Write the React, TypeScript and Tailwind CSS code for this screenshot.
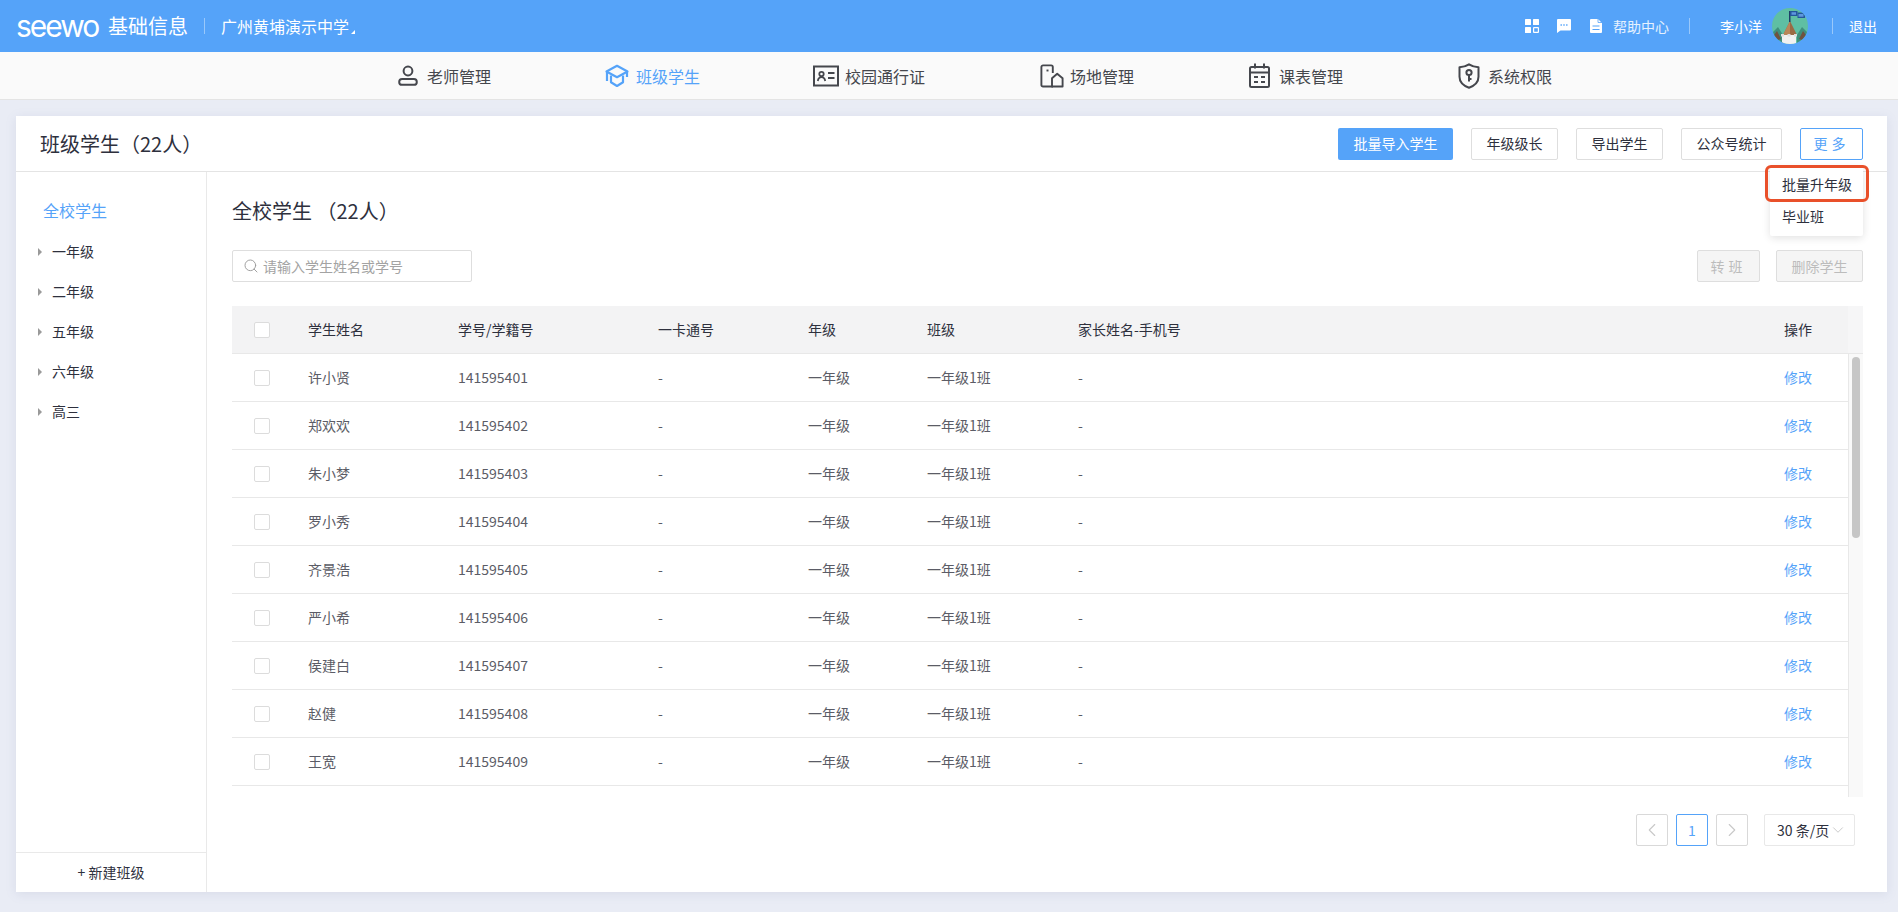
import type { ReactNode } from "react";
import { ChevronDown, ChevronLeft, ChevronRight, Search } from "lucide-react";

const students = [
  ["许小贤", "141595401"],
  ["郑欢欢", "141595402"],
  ["朱小梦", "141595403"],
  ["罗小秀", "141595404"],
  ["齐景浩", "141595405"],
  ["严小希", "141595406"],
  ["侯建白", "141595407"],
  ["赵健", "141595408"],
  ["王宽", "141595409"],
];

const grades = ["一年级", "二年级", "五年级", "六年级", "高三"];

const cols = "grid grid-cols-[76px_150px_200px_150px_119px_151px_706px_64px] items-center";

const UserIcon = () => (
  <svg width="20" height="21" viewBox="0 0 20 21" fill="none" stroke="#45474d" strokeWidth="2">
    <circle cx="10" cy="6" r="4.4" />
    <rect x="1.2" y="14" width="17.6" height="5.8" rx="2.9" />
  </svg>
);

const CapIcon = () => (
  <svg width="24" height="24" viewBox="0 0 24 24" fill="none" stroke="#55a3f9" strokeWidth="2.2" strokeLinejoin="round">
    <path d="M12 1.8 22.5 7.5 12 13.2 1.5 7.5Z" />
    <path d="M2 8v9M6 11.5v6.8l6 3.7 6-3.7v-6.8" />
    <path d="M22 8v5" />
  </svg>
);

const CardIcon = () => (
  <svg width="26" height="22" viewBox="0 0 26 22" fill="none" stroke="#45474d">
    <rect x="1" y="1.5" width="24" height="19" strokeWidth="2" />
    <circle cx="8.5" cy="9" r="2.2" strokeWidth="1.8" />
    <path d="M4.8 16c.4-2.6 1.8-3.8 3.7-3.8s3.3 1.2 3.7 3.8" strokeWidth="1.8" />
    <path d="M15 8h6.5M15 13h6.5" strokeWidth="2" />
  </svg>
);

const PlaceIcon = () => (
  <svg width="24" height="24" viewBox="0 0 24 24" fill="none" stroke="#45474d" strokeWidth="1.9" strokeLinejoin="round">
    <path d="M13 22.5H3a1.6 1.6 0 0 1-1.6-1.6V3A1.6 1.6 0 0 1 3 1.4h8.2A1.6 1.6 0 0 1 12.8 3v6" />
    <path d="M12 22.5v-8.2l5.2-4.5 5.4 4.5v8.2Z" />
    <path d="M6.5 6.5h2" />
  </svg>
);

const CalendarIcon = () => (
  <svg width="21" height="25" viewBox="0 0 21 25" fill="none" stroke="#45474d" strokeWidth="2">
    <rect x="1" y="4" width="19" height="20" rx="1.5" />
    <path d="M6 .5v5M15 .5v5M1 9.5h19" />
    <path d="M5 14h4M12 14h4M5 19h4M12 19h4" />
  </svg>
);

const ShieldIcon = () => (
  <svg width="22" height="26" viewBox="0 0 22 26" fill="none" stroke="#45474d" strokeWidth="2" strokeLinejoin="round">
    <path d="M11 1.3c2.8 1.8 5.8 2.8 9.500 3v9.400c0 5-3.600 8.800-9.500 11-5.900-2.200-9.500-6-9.500-11V4.300c3.700-.2 6.700-1.200 9.500-3Z" />
    <circle cx="11" cy="9.500" r="2.600" />
    <path d="M11 12v6.500M11 16h2.500" />
  </svg>
);

// item pitch and icon slot are taken from the reference, the labels don't line up on a plain gap
const navItems: { label: string; icon: ReactNode; item: string; slot: string; active?: boolean }[] = [
  { label: "老师管理", icon: <UserIcon />, item: "w-[207px]", slot: "w-[29px]" },
  { label: "班级学生", icon: <CapIcon />, item: "w-[208px]", slot: "w-[31px]", active: true },
  { label: "校园通行证", icon: <CardIcon />, item: "w-[227px]", slot: "w-[32px]" },
  { label: "场地管理", icon: <PlaceIcon />, item: "w-[209px]", slot: "w-[30px]" },
  { label: "课表管理", icon: <CalendarIcon />, item: "w-[209px]", slot: "w-[30px]" },
  { label: "系统权限", icon: <ShieldIcon />, item: "w-[100px]", slot: "w-[30px]" },
];

const GridIcon = () => (
  <svg width="14" height="14" viewBox="0 0 14 14" fill="#fff">
    <rect x="0" y="0" width="6" height="6" rx="0.6" />
    <rect x="8" y="0" width="6" height="6" rx="0.6" />
    <rect x="0" y="8" width="6" height="6" rx="0.6" />
    <rect x="8.6" y="8.6" width="4.8" height="4.8" rx="0.4" fill="none" stroke="#fff" strokeWidth="1.2" />
  </svg>
);

const ChatIcon = () => (
  <svg width="14" height="14" viewBox="0 0 14 14">
    <path d="M1 0h12a1 1 0 0 1 1 1v9.500a1 1 0 0 1-1 1H3.500L0 14V1a1 1 0 0 1 1-1Z" fill="#fff" />
    <path d="M3.500 6h1.400M6.300 6h1.400M9.100 6h1.400" stroke="#55a3f9" strokeWidth="1.4" />
  </svg>
);

const DocIcon = () => (
  <svg width="12" height="14" viewBox="0 0 12 14">
    <path d="M1 0h7l4 4v9a1 1 0 0 1-1 1H1a1 1 0 0 1-1-1V1a1 1 0 0 1 1-1Z" fill="#fff" />
    <path d="M2.500 7h7M2.500 10.500h7" stroke="#55a3f9" strokeWidth="1.2" />
    <path d="M8 0v3.500h4" fill="none" stroke="#55a3f9" strokeWidth="0.8" />
  </svg>
);

const Avatar = () => (
  <svg width="36" height="36" viewBox="0 0 36 36">
    <defs>
      <clipPath id="avatar-clip">
        <circle cx="18" cy="18" r="18" />
      </clipPath>
    </defs>
    <g clipPath="url(#avatar-clip)">
      <rect width="36" height="36" fill="#5fbfa3" />
      <path d="M0 25 6 19 11 27 11 36H0Z" fill="#3f8f7c" />
      <path d="M36 25 30 19 25 27 25 36H36Z" fill="#3f8f7c" />
      <path d="M2 27 5 23 9 31 3 33Z" fill="#6f5240" />
      <path d="M34 27 31 23 27 31 33 33Z" fill="#6f5240" />
      <path d="M18 13 25 27H11Z" fill="#9a6a44" />
      <path d="M18 13 18 27H11Z" fill="#b98659" />
      <path d="M10 27h14v9H10Z" fill="#f1f1f1" />
      <path d="M9 26h3v2.500H9ZM15.500 26h3v2.500h-3ZM22 26h3v2.500h-3Z" fill="#dedede" />
      <path d="M17 3h1.500v11H17Z" fill="#1f3f68" />
      <path d="M18 3h7.500v5H18Z" fill="#24569c" />
      <path d="M25.500 4.500H33V10h-7.500Z" fill="#24569c" />
      <path d="M19.500 4.200h4.500v2.600h-4.500ZM26.500 6h5v2.800h-5Z" fill="#5e97de" />
    </g>
  </svg>
);

const Checkbox = () => <span className="block h-4 w-4 rounded-[2px] border border-[#dcdcdc] bg-white" />;

const OutlineButton = ({ children, className }: { children: ReactNode; className: string }) => (
  <button className={`flex h-8 items-center justify-center rounded-[2px] border border-[#dedede] bg-white text-[14px] text-[#2e303d] ${className}`}>
    {children}
  </button>
);

const DisabledButton = ({ children, className }: { children: ReactNode; className: string }) => (
  <button className={`flex h-8 items-center justify-center rounded-[2px] border border-[#dedede] bg-[#f5f5f5] text-[14px] text-[#bcbcbc] ${className}`}>
    {children}
  </button>
);

const App = () => {
  return (
    <div className="flex h-[912px] w-full flex-col overflow-hidden bg-[#e9ecf5] font-['Noto_Sans_CJK_SC','Noto_Sans',sans-serif] text-[#2e303d]">
      {/* top bar */}
      <header className="flex h-[52px] shrink-0 items-center bg-[#55a3f9] pl-4 pr-[21px] text-white">
        <span className="w-[92px] font-['Inter',sans-serif] text-[30px] leading-none font-normal tracking-[-2px]">seewo</span>
        <span className="text-[20px] leading-none">基础信息</span>
        <span className="mx-4 h-4 w-px bg-white/40" />
        <span className="text-[16px] leading-none">广州黄埔演示中学</span>
        <span className="mt-[11px] ml-[2px] h-0 w-0 border-b-[4px] border-l-[4px] border-b-white border-l-transparent" />
        <div className="ml-auto flex items-center">
          <GridIcon />
          <span className="ml-[18px]">
            <ChatIcon />
          </span>
          <span className="ml-[19px]">
            <DocIcon />
          </span>
          <span className="ml-[11px] text-[14px] text-white/85">帮助中心</span>
          <span className="mx-5 h-4 w-px bg-white/40" />
          <span className="ml-[10px] text-[14px]">李小洋</span>
          <span className="ml-[10px] block h-9 w-9">
            <Avatar />
          </span>
          <span className="mx-[16px] ml-6 h-4 w-px bg-white/40" />
          <span className="text-[14px]">退出</span>
        </div>
      </header>

      {/* module nav */}
      <nav className="flex h-12 shrink-0 items-center border-b border-[#e4e4e4] bg-[#fafafa] pl-[398px]">
        {navItems.map((item) => (
          <div key={item.label} className={`flex items-center text-[16px] ${item.item} ${item.active ? "text-[#55a3f9]" : "text-[#45474d]"}`}>
            <span className={`flex ${item.slot}`}>{item.icon}</span>
            <span className="whitespace-nowrap">{item.label}</span>
          </div>
        ))}
      </nav>

      {/* card */}
      <div className="mx-4 mt-4 mr-[11px] mb-5 flex min-h-0 flex-1 flex-col bg-white shadow-[0_2px_10px_rgba(120,130,170,0.15)]">
        <div className="relative flex h-14 shrink-0 items-center border-b border-[#e4e4e4] pr-6 pl-6">
          <h1 className="text-[20px] font-normal">班级学生（22人）</h1>
          <div className="ml-auto flex items-center">
            <button className="flex h-8 w-[115px] items-center justify-center rounded-[2px] bg-[#55a3f9] text-[14px] text-white">批量导入学生</button>
            <OutlineButton className="ml-[18px] w-[87px]">年级级长</OutlineButton>
            <OutlineButton className="ml-[18px] w-[87px]">导出学生</OutlineButton>
            <OutlineButton className="ml-[18px] w-[101px]">公众号统计</OutlineButton>
            <button className="ml-[18px] flex h-8 w-[63px] items-center justify-center rounded-[2px] border border-[#55a3f9] text-[14px] tracking-[4px] text-[#55a3f9]">更多</button>
          </div>

          {/* dropdown */}
          <div className="absolute top-[51px] right-6 z-10 h-[69px] w-[93px] rounded-[2px] bg-white text-[14px] shadow-[0_2px_8px_rgba(0,0,0,0.12)]">
            <div className="flex h-[34px] items-center pl-3">批量升年级</div>
            <div className="flex h-[30px] items-center pl-3">毕业班</div>
            <span className="absolute top-[-2px] left-[-5px] h-[37px] w-[104px] rounded-[6px] border-[3px] border-[#e9502a]" />
          </div>
        </div>

        <div className="flex min-h-0 flex-1">
          {/* class tree */}
          <aside className="flex w-[191px] shrink-0 flex-col border-r border-[#e9e9e9]">
            <div className="flex-1 pt-[26px]">
              <div className="pl-[27px] text-[16px] leading-[24px] text-[#55a3f9]">全校学生</div>
              <ul className="mt-4 flex flex-col gap-[13px]">
                {grades.map((g) => (
                  <li key={g} className="flex h-[27px] items-center text-[14px]">
                    <span className="ml-[22px] h-0 w-0 border-y-[4px] border-l-[4px] border-y-transparent border-l-[#9a9a9a]" />
                    <span className="ml-[10px]">{g}</span>
                  </li>
                ))}
              </ul>
            </div>
            <div className="flex h-10 items-center justify-center border-t border-[#e9e9e9] text-[14px]">+ 新建班级</div>
          </aside>

          {/* student list */}
          <main className="flex min-w-0 flex-1 flex-col pr-6 pl-[25px]">
            <h2 className="mt-6 text-[20px] leading-[30px] font-normal">全校学生 （22人）</h2>
            <div className="mt-6 flex items-center justify-between">
              <div className="flex h-8 w-[240px] items-center rounded-[2px] border border-[#dedede] pl-[10px]">
                <Search size={16} strokeWidth={1.4} className="text-[#9a9a9a]" />
                <span className="ml-1 text-[14px] text-[#a3a3a3]">请输入学生姓名或学号</span>
              </div>
              <div className="flex gap-4">
                <DisabledButton className="w-[63px] tracking-[4px]">转班</DisabledButton>
                <DisabledButton className="w-[87px]">删除学生</DisabledButton>
              </div>
            </div>

            {/* table */}
            <div className="mt-6 flex h-12 shrink-0 border-b border-[#e8e8e8] text-[14px]">
              <div className={`${cols} flex-1 bg-[#f3f3f4]`}>
                <span className="pl-[22px]">
                  <Checkbox />
                </span>
                <span>学生姓名</span>
                <span>学号/学籍号</span>
                <span>一卡通号</span>
                <span>年级</span>
                <span>班级</span>
                <span>家长姓名-手机号</span>
                <span>操作</span>
              </div>
              <div className="w-[15px] bg-[#f6f6f7]" />
            </div>
            <div className="flex h-[443px] shrink-0">
              <div className="w-[1616px] shrink-0">
                {students.map(([name, no]) => (
                  <div key={no} className={`${cols} h-12 border-b border-[#e8e8e8] text-[14px] text-[#5b5c66]`}>
                    <span className="pl-[22px]">
                      <Checkbox />
                    </span>
                    <span>{name}</span>
                    <span>{no}</span>
                    <span>-</span>
                    <span>一年级</span>
                    <span>一年级1班</span>
                    <span>-</span>
                    <span className="text-[#55a3f9]">修改</span>
                  </div>
                ))}
              </div>
              <div className="w-[15px] border-l border-[#e8e8e8] bg-[#f9f9f9] pt-[3px] pl-[3px]">
                <div className="h-[181px] w-2 rounded-full bg-[#c6c6c6]" />
              </div>
            </div>

            {/* pagination */}
            <div className="mt-[17px] mr-2 flex items-center justify-end">
              <span className="flex h-8 w-8 items-center justify-center rounded-[2px] border border-[#d9d9d9] text-[#c8c8c8]">
                <ChevronLeft size={22} strokeWidth={1.2} />
              </span>
              <span className="ml-2 flex h-8 w-8 items-center justify-center rounded-[2px] border border-[#55a3f9] text-[14px] text-[#55a3f9]">1</span>
              <span className="ml-2 flex h-8 w-8 items-center justify-center rounded-[2px] border border-[#d9d9d9] text-[#c8c8c8]">
                <ChevronRight size={22} strokeWidth={1.2} />
              </span>
              <span className="ml-4 flex h-8 w-[91px] items-center rounded-[2px] border border-[#e8e8e8] pl-3 text-[14px] whitespace-nowrap">
                30 条/页
                <ChevronDown size={18} strokeWidth={1.1} className="text-[#c0c0c0]" />
              </span>
            </div>
          </main>
        </div>
      </div>
    </div>
  );
};

export default App;
